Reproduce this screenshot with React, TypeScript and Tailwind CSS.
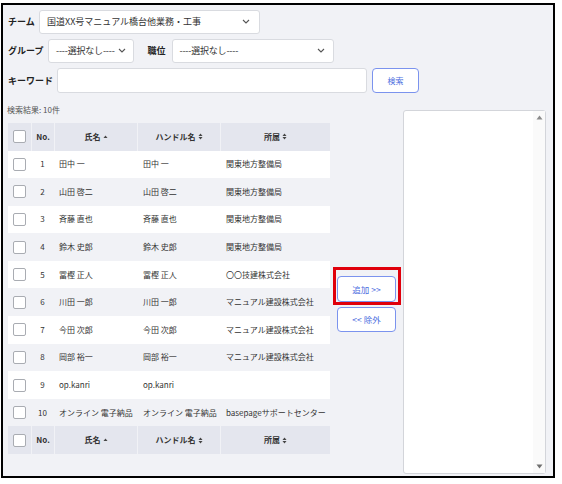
import React from 'react';

const rows = [
  { no: 1, name: '田中 一', handle: '田中 一', org: '関東地方整備局' },
  { no: 2, name: '山田 啓二', handle: '山田 啓二', org: '関東地方整備局' },
  { no: 3, name: '斉藤 直也', handle: '斉藤 直也', org: '関東地方整備局' },
  { no: 4, name: '鈴木 史郎', handle: '鈴木 史郎', org: '関東地方整備局' },
  { no: 5, name: '冨樫 正人', handle: '冨樫 正人', org: '〇〇技建株式会社' },
  { no: 6, name: '川田 一郎', handle: '川田 一郎', org: 'マニュアル建設株式会社' },
  { no: 7, name: '今田 次郎', handle: '今田 次郎', org: 'マニュアル建設株式会社' },
  { no: 8, name: '岡部 裕一', handle: '岡部 裕一', org: 'マニュアル建設株式会社' },
  { no: 9, name: 'op.kanri', handle: 'op.kanri', org: '' },
  { no: 10, name: 'オンライン 電子納品', handle: 'オンライン 電子納品', org: 'basepageサポートセンター' },
];

const Chevron = () => (
  <svg width="8" height="5" viewBox="0 0 8 5" fill="none" stroke="#555" strokeWidth={1.1} className="shrink-0">
    <path d="M1 1l3 3 3-3" />
  </svg>
);

const SortAsc = () => (
  <svg width="5" height="6" viewBox="0 0 5 6" className="ml-[2px]">
    <path d="M0.5 4l2-2.5 2 2.5z" fill="#444" />
  </svg>
);

const SortBoth = () => (
  <svg width="5" height="7" viewBox="0 0 5 7" className="ml-[2px]">
    <path d="M0.5 3l2-2.5 2 2.5z" fill="#444" />
    <path d="M0.5 4l2 2.5 2-2.5z" fill="#444" />
  </svg>
);

const Checkbox = () => (
  <span className="block w-[13px] h-[13px] bg-white border border-[#a9acb2] rounded-[2px]" />
);

const Select = ({ label, className }: { label: string; className: string }) => (
  <div className={`flex items-center justify-between bg-white border border-[#d9dbe0] rounded-[3px] pl-[7px] h-full text-[9px] text-[#333] ${className}`}>
    <span className="whitespace-nowrap">{label}</span>
    <Chevron />
  </div>
);

const HeaderRow = () => (
  <div className="flex h-[28px] text-[8px] font-bold text-[#333]">
    <div className="w-[23px] flex items-center justify-center bg-[#e4e6ee]">
      <Checkbox />
    </div>
    <div className="w-[23px] flex items-center justify-center bg-[#e4e6ee] border-l-[1.5px] border-[#f1f2f6]">No.</div>
    <div className="w-[83px] flex items-center justify-center bg-[#e4e6ee] border-l-[1.5px] border-[#f1f2f6]">
      氏名<SortAsc />
    </div>
    <div className="w-[83px] flex items-center justify-center bg-[#e4e6ee] border-l-[1.5px] border-[#f1f2f6]">
      ハンドル名<SortBoth />
    </div>
    <div className="w-[110px] flex items-center justify-center bg-[#e4e6ee] border-l-[1.5px] border-[#f1f2f6]">
      所属<SortBoth />
    </div>
  </div>
);

export default function App() {
  return (
    <div className="w-[562px] h-[484px] bg-white pt-[3px] pl-[1px]" style={{ fontFamily: '"Noto Sans CJK JP", "Noto Sans", sans-serif' }}>
      <div className="w-[554px] h-[475px] border-2 border-black bg-[#f1f2f6] pl-[5px] pt-[4.5px]">
        {/* search form */}
        <div className="flex items-center h-[24px]">
          <span className="text-[9px] font-bold text-[#222] w-[31px]">チーム</span>
          <Select label="国道XX号マニュアル橋台他業務・工事" className="w-[221px] pr-[9px]" />
        </div>
        <div className="flex items-center h-[24.5px] mt-[5px]">
          <span className="text-[9px] font-bold text-[#222] w-[40px]">グループ</span>
          <Select label="----選択なし----" className="w-[86px] pr-[7px] tracking-[-0.2px]" />
          <span className="text-[9px] font-bold text-[#222] ml-[13.5px] w-[24px]">職位</span>
          <Select label="----選択なし----" className="w-[162px] pr-[8px] tracking-[-0.2px]" />
        </div>
        <div className="flex items-center h-[25px] mt-[5px]">
          <span className="text-[9px] font-bold text-[#222] w-[49px]">キーワード</span>
          <div className="w-[310px] h-full bg-white border border-[#d9dbe0] rounded-[3px]" />
          <button className="ml-[5px] w-[47px] h-full bg-white border border-[#7b93ee] rounded-[4px] text-[8px] text-[#4d6ee0]">
            検索
          </button>
        </div>

        {/* results */}
        <div className="flex mt-[8px]">
          <div className="w-[322px]">
            <div className="h-[17px] flex items-center text-[8px] text-[#555] -ml-[1px]">検索結果: 10件</div>
            <div className="mt-[4.5px]">
              <HeaderRow />
              {rows.map((r, i) => (
                <div key={r.no} className={`flex h-[27.6px] items-center text-[8px] text-[#333] ${i % 2 === 0 ? 'bg-white' : ''}`}>
                  <div className="w-[23px] flex justify-center"><Checkbox /></div>
                  <div className="w-[23px] text-center">{r.no}</div>
                  <div className="w-[83px] pl-[5px] whitespace-nowrap">{r.name}</div>
                  <div className="w-[83px] pl-[6px] whitespace-nowrap">{r.handle}</div>
                  <div className="w-[110px] pl-[6px] whitespace-nowrap">{r.org}</div>
                </div>
              ))}
              <HeaderRow />
            </div>
          </div>

          <div className="ml-[7px] w-[59px] mt-[172.5px] flex flex-col gap-[5px]">
            <div className="relative">
              <button className="w-full h-[26px] bg-white border border-[#7b93ee] rounded-[4px] text-[8.5px] text-[#4d6ee0]">
                追加 &gt;&gt;
              </button>
              <span className="absolute -left-[4px] -right-[5px] -top-[7px] -bottom-[3px] border-[3px] border-[#e0000b]" />
            </div>
            <button className="w-full h-[25px] bg-white border border-[#7b93ee] rounded-[4px] text-[8.5px] text-[#4d6ee0]">
              &lt;&lt; 除外
            </button>
          </div>

          <div className="ml-[7px] mt-[8.5px] w-[143px] h-[364px] bg-white border border-[#d3d5da] rounded-[3px] flex justify-end">
            <div className="w-[12px] h-full bg-[#fafafa] flex flex-col items-center justify-between py-[4px]">
              <svg width="7" height="5" viewBox="0 0 7 5"><path d="M0.5 4.5l3-4 3 4z" fill="#8a8a8a" /></svg>
              <svg width="7" height="5" viewBox="0 0 7 5"><path d="M0.5 0.5l3 4 3-4z" fill="#6f6f6f" /></svg>
            </div>
          </div>
        </div>
      </div>
    </div>
  );
}
